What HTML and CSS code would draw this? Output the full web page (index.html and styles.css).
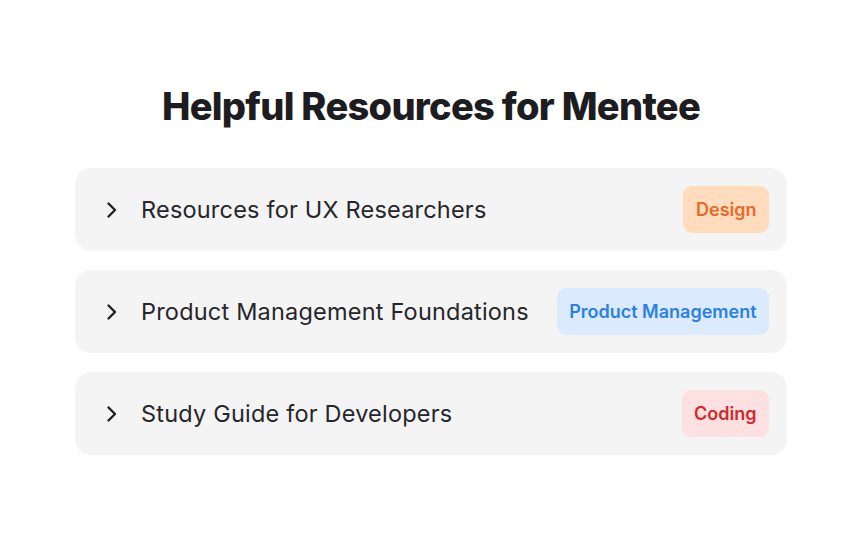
FILE: index.html
```html
<!DOCTYPE html>
<html>
<head>
<meta charset="utf-8">
<link rel="stylesheet" href="styles.css">
</head>
<body>
<main class="page">
  <h1 class="title">Helpful Resources for Mentee</h1>
  <ul class="list">
    <li class="card">
      <svg class="chev" viewBox="0 0 20 20" width="20" height="20"><path d="M6.5 3.5l6.5 6.5-6.5 6.5" fill="none" stroke="#1f1f23" stroke-width="2.4" stroke-linecap="round" stroke-linejoin="round"/></svg>
      <span class="label">Resources for UX Researchers</span>
      <span class="badge badge-design">Design</span>
    </li>
    <li class="card">
      <svg class="chev" viewBox="0 0 20 20" width="20" height="20"><path d="M6.5 3.5l6.5 6.5-6.5 6.5" fill="none" stroke="#1f1f23" stroke-width="2.4" stroke-linecap="round" stroke-linejoin="round"/></svg>
      <span class="label">Product Management Foundations</span>
      <span class="badge badge-pm">Product Management</span>
    </li>
    <li class="card">
      <svg class="chev" viewBox="0 0 20 20" width="20" height="20"><path d="M6.5 3.5l6.5 6.5-6.5 6.5" fill="none" stroke="#1f1f23" stroke-width="2.4" stroke-linecap="round" stroke-linejoin="round"/></svg>
      <span class="label">Study Guide for Developers</span>
      <span class="badge badge-coding">Coding</span>
    </li>
  </ul>
</main>
</body>
</html>
```
FILE: styles.css
```css
html, body {
  margin: 0;
  padding: 0;
  background: #ffffff;
}
body {
  font-family: Inter, "Noto Sans", sans-serif;
  color: #1f1f23;
}
.page {
  width: 712px;
  margin: 0 0 0 75px;
  padding-top: 83px;
}
.title {
  margin: 0 0 39px;
  text-align: center;
  font-size: 38px;
  line-height: 46px;
  font-weight: 800;
  letter-spacing: -0.7px;
  color: #1c1c21;
}
.list {
  list-style: none;
  margin: 0;
  padding: 0;
  display: flex;
  flex-direction: column;
  gap: 19px;
}
.card {
  display: flex;
  align-items: center;
  height: 83px;
  box-sizing: border-box;
  padding: 0 18px 0 27px;
  background: #f4f4f5;
  border-radius: 16px;
}
.chev {
  flex: none;
  margin-right: 19px;
}
.label {
  flex: 1;
  font-size: 23.5px;
  font-weight: 400;
  letter-spacing: 0.2px;
  color: #26262b;
}
.badge {
  flex: none;
  height: 47px;
  line-height: 47px;
  padding: 0 12.5px;
  border-radius: 9px;
  font-size: 18px;
  font-weight: 600;
}
.badge-design {
  background: #ffdcbd;
  color: #e8692a;
}
.badge-pm {
  background: #dceafd;
  color: #2a80e6;
}
.badge-coding {
  background: #fde0e0;
  color: #d3282c;
}
```
